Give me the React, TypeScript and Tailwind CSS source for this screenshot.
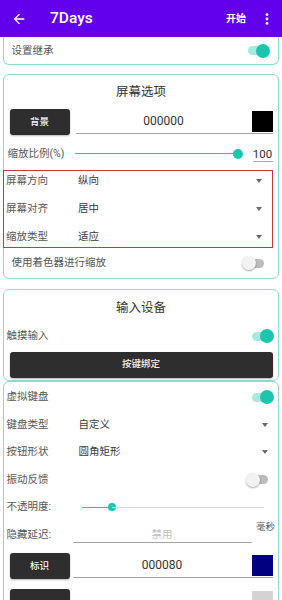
import React from 'react';

// --- Small pieces ---
const Toggle: React.FC<{ on: boolean }> = ({ on }) => (
    <div className="relative w-[23px] h-[14px] flex items-center shrink-0">
        <div className={`ml-[1px] w-[21px] h-[9px] rounded-full ${on ? 'bg-[#a6e9df]' : 'bg-[#bcbcbc]'}`} />
        <div
            className={`absolute top-0 w-[14px] h-[14px] rounded-full ${
                on ? 'right-0 bg-[#1cc6ae]' : 'left-0 bg-[#f2f2f2] shadow-[0_1px_2px_rgba(0,0,0,0.35)]'
            }`}
        />
    </div>
);

const Caret: React.FC = () => (
    <svg width="6" height="4" viewBox="0 0 6 4" className="shrink-0">
        <path d="M0 0 H6 L3 4 Z" fill="#6b6b6b" />
    </svg>
);

const DarkButton: React.FC<{ label: string; wide?: boolean }> = ({ label, wide }) => (
    <div
        className={`${wide ? 'w-full' : 'w-[60px]'} h-[26px] rounded-[3px] bg-[#2e2e2e] flex items-center justify-center text-[#f4f4f4] text-[9.5px] font-medium shadow-[0_1px_2px_rgba(0,0,0,0.3)] shrink-0`}
    >
        {label}
    </div>
);

const SelectRow: React.FC<{ label: string; value: string; h: string }> = ({ label, value, h }) => (
    <div className={`flex items-center ${h} pl-[2.5px] pr-[10px]`}>
        <span className="w-[72px] text-[10.5px] text-[#555]">{label}</span>
        <span className="flex-1 text-[10.5px] text-[#3a3a3a]">{value}</span>
        <Caret />
    </div>
);

const ColorRow: React.FC<{ label: string; value: string; swatch: string; gap: string }> = ({ label, value, swatch, gap }) => (
    <div className={`flex items-start pl-[5.5px] pr-[5.5px] ${gap}`}>
        <DarkButton label={label} />
        <div className="flex-1 flex items-start border-b-[1.5px] border-[#a3a3a3] h-[25px]">
            <span className="flex-1 text-center text-[12px] leading-[24px] text-[#333]">{value}</span>
            <div className={`w-[21px] h-[21px] mt-[1.5px] ${swatch}`} />
        </div>
    </div>
);

export default function App() {
    return (
        <div className="w-[282px] h-[600px] overflow-hidden bg-white font-['Roboto','Noto_Sans_CJK_SC',sans-serif]">
            {/* Header */}
            <div className="h-[37px] bg-[#6200ee] flex items-center text-white">
                <svg width="16" height="16" viewBox="0 0 24 24" className="ml-[11px]">
                    <path d="M20 11H7.83l5.59-5.59L12 4l-8 8 8 8 1.41-1.41L7.83 13H20v-2z" fill="white" />
                </svg>
                <span className="ml-[23px] text-[15.5px] font-medium">7Days</span>
                <span className="ml-auto text-[10px] font-bold">开始</span>
                <svg width="4" height="12" viewBox="0 0 4 12" className="ml-[19px] mr-[13px]">
                    <circle cx="2" cy="1.6" r="1.4" fill="white" />
                    <circle cx="2" cy="6" r="1.4" fill="white" />
                    <circle cx="2" cy="10.4" r="1.4" fill="white" />
                </svg>
            </div>

            <div className="px-[3px]">
                {/* Inheritance card (scrolled under header) */}
                <div className="h-[28px] border-[1.5px] border-t-0 border-[#8adcd2] rounded-b-[6px] flex items-center pl-[7.5px] pr-[8px]">
                    <span className="flex-1 text-[10.5px] text-[#555]">设置继承</span>
                    <Toggle on />
                </div>

                {/* Screen options */}
                <div className="mt-[9px] border-[1.5px] border-[#8adcd2] rounded-[6px]">
                    <div className="h-[34px] flex items-center justify-center text-[12.5px] text-[#333]">屏幕选项</div>
                    <div className="h-[28px]">
                        <ColorRow label="背景" value="000000" swatch="bg-black" gap="gap-[6px]" />
                    </div>
                    <div className="h-[33px] flex items-center pl-[3.5px] pr-[5.5px]">
                        <span className="w-[67px] text-[10.5px] text-[#555]">缩放比例(%)</span>
                        <div className="w-[168px] flex items-center">
                            <div className="flex-1 h-[1.5px] bg-[#1cc6ae]" />
                            <div className="w-[10px] h-[10px] rounded-full bg-[#1cc6ae] -ml-[5px]" />
                        </div>
                        <div className="ml-auto w-[20px] text-[11.5px] text-[#333] border-b-[1.5px] border-[#aaa] leading-[14px] text-center mt-[2px]">100</div>
                    </div>
                    <div className="-ml-[1.5px] w-[270px] h-[78px] border-[1.5px] border-[#d2323f] flex flex-col gap-[9px]">
                        <SelectRow label="屏幕方向" value="纵向" h="h-[19px]" />
                        <SelectRow label="屏幕对齐" value="居中" h="h-[19px]" />
                        <SelectRow label="缩放类型" value="适应" h="h-[19px]" />
                    </div>
                    <div className="h-[30px] flex items-center pl-[7.5px] pr-[13px]">
                        <span className="flex-1 text-[10.5px] text-[#555]">使用着色器进行缩放</span>
                        <Toggle on={false} />
                    </div>
                </div>

                {/* Input devices */}
                <div className="mt-[10px] border-[1.5px] border-[#8adcd2] rounded-[6px] pb-[2px]">
                    <div className="h-[36px] flex items-center justify-center text-[12.5px] text-[#333]">输入设备</div>
                    <div className="h-[20px] flex items-center pl-[2.5px] pr-[4.5px]">
                        <span className="flex-1 text-[10.5px] text-[#555]">触摸输入</span>
                        <Toggle on />
                    </div>
                    <div className="mt-[5.5px] px-[5.5px]">
                        <DarkButton label="按键绑定" wide />
                    </div>
                </div>

                {/* Virtual keyboard */}
                <div className="border-[1.5px] border-[#8adcd2] rounded-[6px] pt-[2px] h-[240px]">
                    <div className="h-[27.5px] flex items-center pl-[2.5px] pr-[4.5px]">
                        <span className="flex-1 text-[10.5px] text-[#555]">虚拟键盘</span>
                        <Toggle on />
                    </div>
                    <SelectRow label="键盘类型" value="自定义" h="h-[27.5px]" />
                    <SelectRow label="按钮形状" value="圆角矩形" h="h-[27.5px]" />
                    <div className="h-[27.5px] flex items-center pl-[2.5px] pr-[9px]">
                        <span className="flex-1 text-[10.5px] text-[#555]">振动反馈</span>
                        <Toggle on={false} />
                    </div>
                    <div className="h-[27.5px] flex items-center pl-[2.5px] pr-[14px]">
                        <span className="w-[75px] text-[10.5px] text-[#555]">不透明度:</span>
                        <div className="flex-1 flex items-center">
                            <div className="w-[30px] h-[1.5px] bg-[#1cc6ae]" />
                            <div className="w-[8px] h-[8px] rounded-full bg-[#1cc6ae] -mx-[4px]" />
                            <div className="flex-1 h-[1px] bg-[#d8d8d8]" />
                        </div>
                    </div>
                    <div className="h-[27.5px] flex pl-[2.5px] pr-[3px]">
                        <span className="self-center w-[66px] text-[10.5px] text-[#555]">隐藏延迟:</span>
                        <div className="self-center w-[179px] h-[16px] border-b-[1.5px] border-[#a3a3a3] text-center text-[10.5px] leading-[16px] text-[#bdbdbd]">禁用</div>
                        <span className="ml-auto text-[9.5px] leading-[12px] text-[#555]">毫秒</span>
                    </div>
                    <div className="mt-[4.5px] h-[36px]">
                        <ColorRow label="标识" value="000080" swatch="bg-[#000080]" gap="gap-[3px]" />
                    </div>
                    <div className="flex items-start pl-[5.5px] pr-[5.5px]">
                        <DarkButton label="" />
                        <div className="ml-auto mt-[2px] w-[21px] h-[21px] bg-[#d3d3d3]" />
                    </div>
                </div>
            </div>
        </div>
    );
}
